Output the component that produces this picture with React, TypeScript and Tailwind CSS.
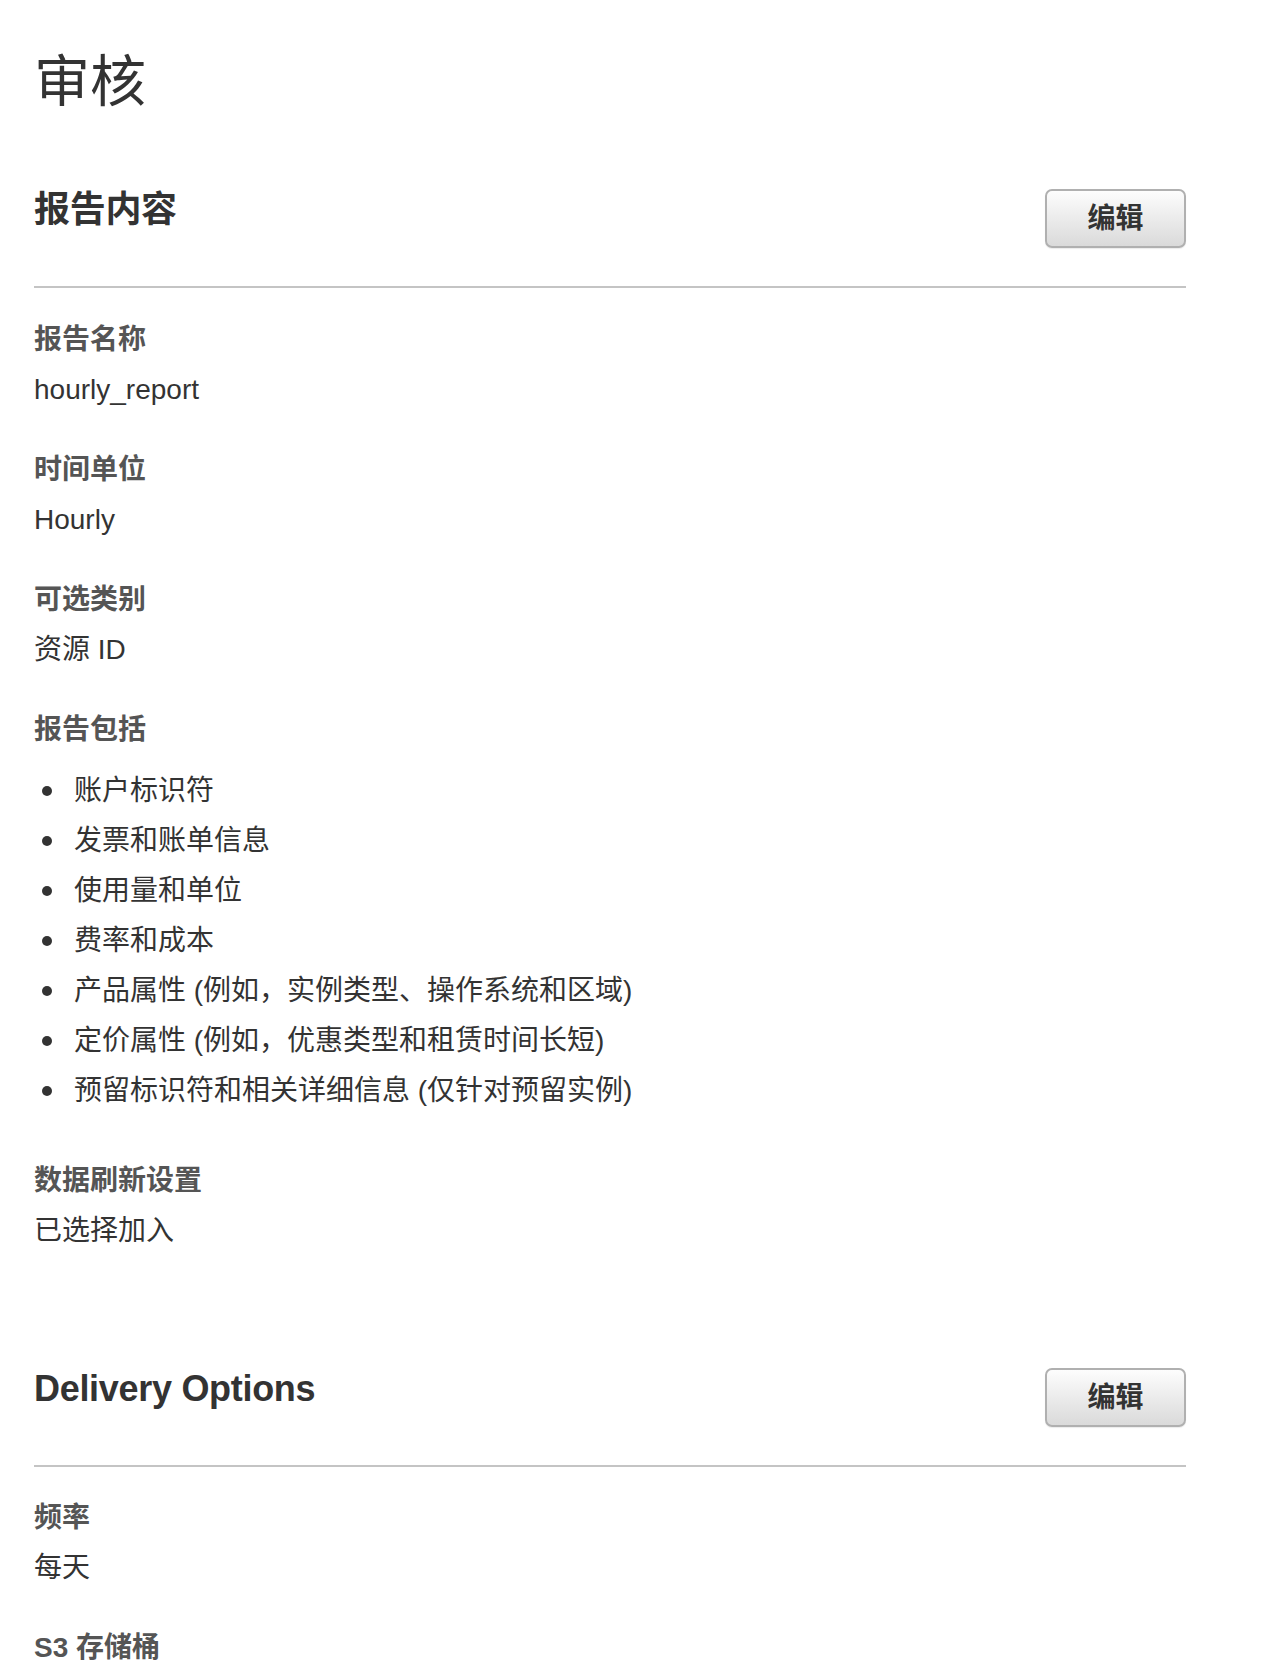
const font = { fontFamily: '"Liberation Sans", "Noto Sans CJK SC", sans-serif' };

function EditButton() {
  return (
    <button
      type="button"
      className="mt-[1px] w-[141px] h-[59px] rounded-[7px] border-2 border-[#b0b0b0] bg-gradient-to-b from-[#fdfdfd] to-[#dadada] text-[28px] font-bold text-[#333] shadow-[0_1px_1px_rgba(0,0,0,0.08)]"
    >
      编辑
    </button>
  );
}

function SectionHeader({ title }: { title: string }) {
  return (
    <div>
      <div className="flex items-start justify-between">
        <h2 className="text-[36px] leading-[44px] font-bold tracking-[-0.3px] text-[#333]">{title}</h2>
        <EditButton />
      </div>
      <div className="mt-[38px] h-[2px] bg-[#c4c4c4]" />
    </div>
  );
}

function Field({ label, children }: { label: string; children: React.ReactNode }) {
  return (
    <div>
      <div className="text-[28px] leading-[36px] font-bold text-[#555]">{label}</div>
      <div className="mt-[14px] text-[28px] leading-[36px] text-[#333]">{children}</div>
    </div>
  );
}

const includes = [
  '账户标识符',
  '发票和账单信息',
  '使用量和单位',
  '费率和成本',
  '产品属性 (例如，实例类型、操作系统和区域)',
  '定价属性 (例如，优惠类型和租赁时间长短)',
  '预留标识符和相关详细信息 (仅针对预留实例)',
];

export default function App() {
  return (
    <div className="min-h-screen bg-white" style={font}>
      <div className="ml-[34px] w-[1152px] pt-[50px] pb-10">
        <h1 className="text-[56px] leading-[64px] font-normal text-[#333]">审核</h1>

        <div className="mt-[74px]">
          <SectionHeader title="报告内容" />
        </div>

        <div className="mt-[34px] flex flex-col gap-[44px]">
          <Field label="报告名称">hourly_report</Field>
          <Field label="时间单位">Hourly</Field>
          <Field label="可选类别">资源 ID</Field>
          <div>
            <div className="text-[28px] leading-[36px] font-bold text-[#555]">报告包括</div>
            <ul className="mt-[18px]">
              {includes.map((item) => (
                <li key={item} className="flex items-center text-[28px] leading-[50px] text-[#333]">
                  <span className="w-[40px] shrink-0">
                    <span className="ml-[8px] block w-[10px] h-[10px] rounded-full bg-[#333]" />
                  </span>
                  {item}
                </li>
              ))}
            </ul>
          </div>
          <div className="mt-[3px]">
            <Field label="数据刷新设置">已选择加入</Field>
          </div>
        </div>

        <div className="mt-[118px]">
          <SectionHeader title="Delivery Options" />
        </div>

        <div className="mt-[33px] flex flex-col gap-[44px]">
          <Field label="频率">每天</Field>
          <div className="text-[28px] leading-[36px] font-bold text-[#555]">S3 存储桶</div>
        </div>
      </div>
    </div>
  );
}
